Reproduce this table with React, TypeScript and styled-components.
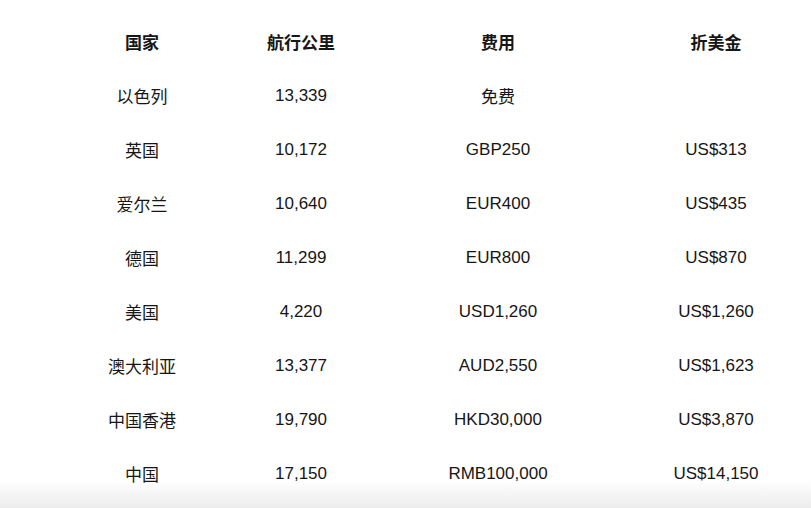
import styled, { createGlobalStyle } from "styled-components"

const GlobalStyle = createGlobalStyle`
  html, body {
    margin: 0;
    padding: 0;
    height: 508px;
    overflow: hidden;
  }
  body {
    background: linear-gradient(to bottom, #ffffff 0, #ffffff 480px, #ececec 508px);
    font-family: "Liberation Sans", "Noto Sans CJK SC", sans-serif;
    color: #161616;
  }
`

type Row = [string, string, string, string]

const rows: Row[] = [
  ["以色列", "13,339", "免费", ""],
  ["英国", "10,172", "GBP250", "US$313"],
  ["爱尔兰", "10,640", "EUR400", "US$435"],
  ["德国", "11,299", "EUR800", "US$870"],
  ["美国", "4,220", "USD1,260", "US$1,260"],
  ["澳大利亚", "13,377", "AUD2,550", "US$1,623"],
  ["中国香港", "19,790", "HKD30,000", "US$3,870"],
  ["中国", "17,150", "RMB100,000", "US$14,150"],
]

const headers = ["国家", "航行公里", "费用", "折美金"]

const Table = styled.div`
  display: grid;
  grid-template-columns: 160px 158px 236px 200px;
  grid-auto-rows: 54px;
  padding: 15px 0 0 62px;
  width: 816px;
  box-sizing: border-box;
`

const Cell = styled.div<{ $head?: boolean }>`
  display: flex;
  align-items: center;
  justify-content: center;
  font-size: 17px;
  line-height: 20px;
  font-weight: ${p => (p.$head ? 700 : 400)};
  white-space: nowrap;
`

const CjkCell = styled(Cell)`
  font-family: "Noto Sans CJK SC", sans-serif;
  line-height: 20px;
`

const isCjk = (s: string) => /[\u4e00-\u9fff]/.test(s)

export default function App() {
  return (
    <>
      <GlobalStyle />
      <Table>
        {headers.map(h => (
          <CjkCell key={h} $head>{h}</CjkCell>
        ))}
        {rows.map(r =>
          r.map((c, i) =>
            isCjk(c) ? (
              <CjkCell key={r[0] + i}>{c}</CjkCell>
            ) : (
              <Cell key={r[0] + i}>{c}</Cell>
            )
          )
        )}
      </Table>
    </>
  )
}
